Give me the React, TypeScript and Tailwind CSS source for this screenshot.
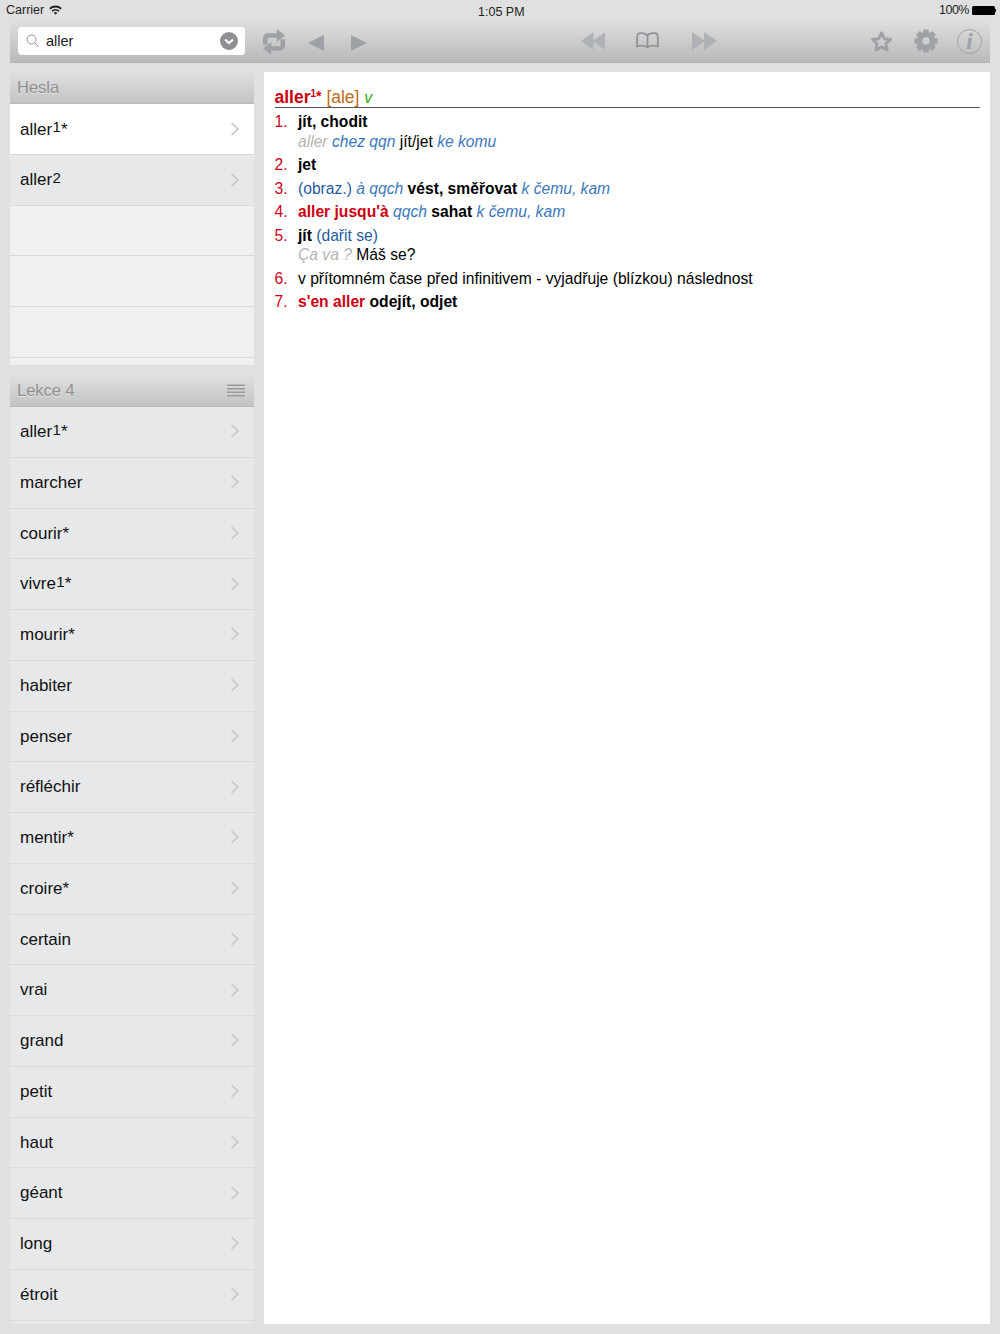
import React from "react";

const FONT = "[font-family:'Liberation_Sans',Arial,sans-serif]";

function Chevron() {
  return (
    <svg width="10" height="16" viewBox="0 0 10 16" fill="none" className="shrink-0 mb-[1px]">
      <path d="M1.5 2l6.5 6-6.5 6" stroke="#c4c5c8" strokeWidth="1.6" />
    </svg>
  );
}

function Word({ w }: { w: string }) {
  const m = w.match(/^([^\d]+)(\d)(\*?)$/);
  if (!m) return <span>{w}</span>;
  return (
    <span>
      {m[1]}
      <span className="text-[15px] leading-[0] relative -top-[2.5px] mx-[0.25px]">{m[2]}</span>
      {m[3]}
    </span>
  );
}

function Row({ w, selected, empty, top }: { w?: string; selected?: boolean; empty?: boolean; top?: boolean }) {
  return (
    <div
      className={`h-[50.75px] shrink-0 flex items-center justify-between pl-[10px] pr-[14.500px] border-b border-[#d8d9db] text-[17px] text-[#111] ${
        selected ? "bg-white" : empty ? "bg-[#f1f1f2]" : "bg-[#e7e8ea]"
      } ${top ? "pt-[1px]" : ""}`}
    >
      {w ? <Word w={w} /> : null}
      {w ? <Chevron /> : null}
    </div>
  );
}

function Header({ title, menu }: { title: string; menu?: boolean }) {
  return (
    <div className="h-[32px] shrink-0 flex items-center justify-between pl-[7px] pr-[9px] bg-gradient-to-b from-[#e0e0e0] to-[#c2c3c3] border-b border-[#b9b9b9]">
      <span className="text-[16.5px] text-[#8e8e90] [text-shadow:0_1px_0_rgba(255,255,255,0.55)]">{title}</span>
      {menu ? (
        <svg width="18" height="14" viewBox="0 0 18 14" fill="#9a9b9d">
          <rect y="0.5" width="18" height="1.5" />
          <rect y="4" width="18" height="1.5" />
          <rect y="7.5" width="18" height="1.5" />
          <rect y="11" width="18" height="1.5" />
        </svg>
      ) : null}
    </div>
  );
}

const lesson = [
  "aller1*", "marcher", "courir*", "vivre1*", "mourir*", "habiter", "penser", "réfléchir", "mentir*",
  "croire*", "certain", "vrai", "grand", "petit", "haut", "géant", "long", "étroit", "",
];

const ICON = "#9ea2a7";

function Toolbar() {
  return (
    <div className="mx-[10px] h-[41px] pb-[2px] flex items-center bg-gradient-to-b from-[#dedede] to-[#b9b9b9] border-b border-[#b4b4b4] relative">
      <div className="ml-[8px] w-[226.500px] h-[28px] bg-white rounded-[4px] flex items-center pl-[8px] pr-[7px]">
        <svg width="13" height="14" viewBox="0 0 13 14" fill="none" stroke="#8e8e93" strokeWidth="1">
          <circle cx="5.5" cy="5.5" r="4.5" />
          <path d="M9 9l3.5 4" />
        </svg>
        <span className="ml-[7px] mt-[1px] text-[14.5px] text-[#222] flex-1">aller</span>
        <svg width="18" height="18" viewBox="0 0 18 18">
          <circle cx="9" cy="9" r="9" fill="#8e8e93" />
          <path d="M5 7.500l4 3.600 4-3.600" fill="none" stroke="#fff" strokeWidth="2" />
        </svg>
      </div>
      <svg className="ml-[17px] mt-[2px] shrink-0" width="24" height="28" viewBox="0 0 26 28" fill="none">
        <path d="M3.500 17V10A3 3 0 0 1 6.500 7H17" stroke={ICON} strokeWidth="5" />
        <path d="M16 0l9 7-9 7z" fill={ICON} />
        <path d="M22.500 11v7a3 3 0 0 1-3 3H9" stroke={ICON} strokeWidth="5" />
        <path d="M10 14l-9 7 9 7z" fill={ICON} />
      </svg>
      <svg className="ml-[22.500px] mt-[3px] shrink-0" width="16" height="16" viewBox="0 0 16 18" preserveAspectRatio="none">
        <path d="M16 0v18L0 9z" fill={ICON} />
      </svg>
      <svg className="ml-[27px] mt-[3px] shrink-0" width="16" height="16" viewBox="0 0 16 18" preserveAspectRatio="none">
        <path d="M0 0v18l16-9z" fill={ICON} />
      </svg>
      <svg className="ml-[214px] shrink-0" width="24" height="18" viewBox="0 0 25 18" fill="#aeb1b5">
        <path d="M13 0v18L0 9z" />
        <path d="M25 0v18L12 9z" />
      </svg>
      <svg className="ml-[31px] -mt-[2px] shrink-0" width="23" height="16" viewBox="0 0 23 16" fill="none" stroke="#8f9398" strokeWidth="1.800">
        <path d="M11.500 3.500C10 1.500 7 1 4 1.200 2.500 1.300 1.500 2.500 1.300 4L1 14.500c3.500-1.300 7.500-1 10.500.8 3-1.800 7-2.100 10.500-.8L21.700 4c-.2-1.500-1.200-2.700-2.700-2.800-3-.2-6 .3-7.500 2.300z" />
        <path d="M11.500 3.500v11.500" />
      </svg>
      <svg className="ml-[33px] shrink-0" width="25" height="18" viewBox="0 0 25 18" fill="#aeb1b5">
        <path d="M0 0v18l13-9z" />
        <path d="M12 0v18l13-9z" />
      </svg>
      <svg className="ml-[153px] mt-[1px] shrink-0" width="23" height="23" viewBox="0 0 24 23" fill="none" stroke={ICON} strokeWidth="3" strokeLinejoin="round">
        <path d="M12 2.500l2.900 6.100 6.600.8-4.900 4.500 1.300 6.600L12 17.200 6.100 20.500l1.300-6.600-4.900-4.500 6.600-.8z" />
      </svg>
      <svg className="ml-[21px] shrink-0" width="24" height="24" viewBox="0 0 24 24" fill={ICON}>
        <circle cx="12" cy="12" r="6.500" fill="none" stroke={ICON} strokeWidth="5.500" />
        {[0, 45, 90, 135, 180, 225, 270, 315].map((a) => (
          <rect key={a} x="9.200" y="0.500" width="5.600" height="5" rx="0.6" transform={`rotate(${a} 12 12)`} />
        ))}
      </svg>
      <div className="ml-[19px] w-[25px] h-[25px] shrink-0 rounded-full border-[1.5px] border-[#9ea2a7] flex items-center justify-center">
        <span className="[font-family:'Liberation_Serif',serif] italic font-bold text-[23px] leading-none text-[#9ea2a7]">i</span>
      </div>
    </div>
  );
}

function Def({ n, children, sub }: { n: number; children: React.ReactNode; sub?: React.ReactNode }) {
  return (
    <div className="flex mt-[4px]">
      <span className="w-[23.500px] shrink-0 text-[#d0021b]">{n}.</span>
      <div>
        <div>{children}</div>
        {sub ? <div>{sub}</div> : null}
      </div>
    </div>
  );
}

const B = ({ children }: { children: React.ReactNode }) => <b className="font-bold text-black">{children}</b>;
const R = ({ children }: { children: React.ReactNode }) => <b className="font-bold text-[#cc0011]">{children}</b>;
const E = ({ children }: { children: React.ReactNode }) => <i className="italic text-[#3b78bd]">{children}</i>;
const G = ({ children }: { children: React.ReactNode }) => <i className="italic text-[#b3b3b3]">{children}</i>;
const N = ({ children }: { children: React.ReactNode }) => <span className="text-[#1f5a9e]">{children}</span>;

export default function App() {
  return (
    <div className={`${FONT} w-[1000px] h-[1334px] bg-[#e0e0e0] overflow-hidden`}>
      <div className="h-[22px] pb-[1px] relative flex items-center justify-between pl-[6px] pr-[4px] text-[12.500px] text-[#222]">
        <div className="flex items-center gap-[5px]">
          <span>Carrier</span>
          <svg className="-mt-[1px]" width="13" height="10" viewBox="0 0 13 10" fill="#222">
            <path d="M6.500 9.800L4.700 7.800a2.600 2.600 0 0 1 3.600 0z" />
            <path d="M3.600 6.700l-1.100-1.200a5.900 5.900 0 0 1 8 0l-1.100 1.200a4.300 4.300 0 0 0-5.800 0z" />
            <path d="M1.400 4.400L.2 3.100a9.200 9.200 0 0 1 12.600 0l-1.200 1.300a7.500 7.500 0 0 0-10.200 0z" />
          </svg>
        </div>
        <span className="absolute left-[478px] top-[2.500px]">1:05 PM</span>
        <div className="flex items-center gap-[3px]">
          <span className="tracking-[-0.5px]">100%</span>
          <div className="flex items-center">
            <div className="w-[23px] h-[9px] bg-black rounded-[1.500px]" />
            <div className="w-[1px] h-[3px] bg-[#222]" />
          </div>
        </div>
      </div>
      <Toolbar />
      <div className="mt-[9px] ml-[10px] flex gap-[10px] h-[1252px]">
        <div className="w-[244px] flex flex-col">
          <div className="h-[293px] overflow-hidden flex flex-col bg-[#f1f1f2] shrink-0">
            <Header title="Hesla" />
            <Row w="aller1*" selected top />
            <Row w="aller2" top />
            <Row empty />
            <Row empty />
            <Row empty />
          </div>
          <div className="mt-[10px] flex flex-col flex-1 min-h-0 overflow-hidden">
            <Header title="Lekce 4" menu />
            {lesson.map((w, i) => (w ? <Row key={i} w={w} /> : <Row key={i} />))}
          </div>
        </div>
        <div className="w-[726px] bg-white pl-[10.500px] pr-[10px] pt-[12px] text-[15.650px] leading-[19.500px] text-black">
          <div className="border-b border-[#555] h-[24px] flex items-end text-[17.500px] leading-[19px]">
            <span>
              <b className="font-bold text-[#cc0011]">
                aller<span className="text-[10px] leading-[0] relative -top-[6px]">1</span>
                <span className="text-[14px] leading-[0] relative -top-[2px]">*</span>
              </b>{" "}
              <span className="text-[#c46a1a]">[ale]</span> <i className="italic text-[#22b014] text-[16px]">v</i>
            </span>
          </div>
          <Def n={1} sub={<><G>aller</G> <E>chez qqn</E> <span>jít/jet</span> <E>ke komu</E></>}>
            <B>jít, chodit</B>
          </Def>
          <Def n={2}><B>jet</B></Def>
          <Def n={3}>
            <N>(obraz.)</N> <E>à qqch</E> <B>vést, směřovat</B> <E>k čemu, kam</E>
          </Def>
          <Def n={4}>
            <R>aller jusqu'à</R> <E>qqch</E> <B>sahat</B> <E>k čemu, kam</E>
          </Def>
          <Def n={5} sub={<><G>Ça va ?</G> Máš se?</>}>
            <B>jít</B> <N>(dařit se)</N>
          </Def>
          <Def n={6}>v přítomném čase před infinitivem - vyjadřuje (blízkou) následnost</Def>
          <Def n={7}>
            <R>s'en aller</R> <B>odejít, odjet</B>
          </Def>
        </div>
      </div>
    </div>
  );
}
